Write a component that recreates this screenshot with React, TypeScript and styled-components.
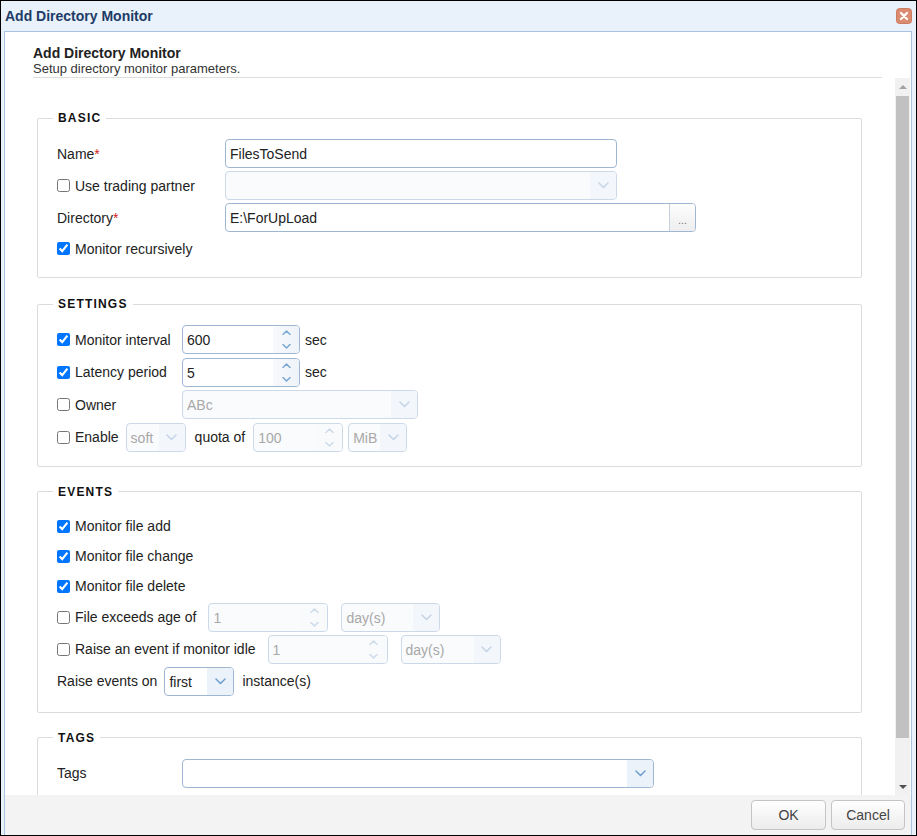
import React from 'react';
import styled, { createGlobalStyle } from 'styled-components';

const GlobalStyle = createGlobalStyle`
  html, body { margin: 0; padding: 0; background: #fff; }
  body {
    font-family: "Liberation Sans", Arial, Helvetica, sans-serif;
    font-size: 14px;
    color: #222;
  }
  *, *::before, *::after { box-sizing: border-box; }
`;

const Window = styled.div`
  width: 917px;
  height: 836px;
  border: 1px solid #000;
  background: #e9f1fb;
  display: flex;
  flex-direction: column;
  overflow: hidden;
`;

const TitleBar = styled.div`
  height: 30px;
  flex-shrink: 0;
  display: flex;
  align-items: center;
  justify-content: space-between;
  padding: 0 4px 1px 4px;
`;

const TitleText = styled.div`
  font-size: 14px;
  font-weight: bold;
  color: #1d3b66;
`;

const CloseButton = styled.button`
  width: 16px;
  height: 16px;
  padding: 0;
  border: none;
  background: none;
  display: flex;
  cursor: pointer;
`;

const Panel = styled.div`
  flex: 1;
  min-height: 0;
  margin: 0 4px 0 3px;
  border: 1px solid #a9c3e3;
  border-bottom: none;
  background: #fff;
  display: flex;
  flex-direction: column;
`;

const Header = styled.div`
  flex-shrink: 0;
  margin: 0 29px 0 28px;
  padding: 13px 0 1px;
  border-bottom: 1px solid #dedede;
`;

const HeaderTitle = styled.div`
  font-size: 14px;
  font-weight: bold;
  line-height: 16px;
  color: #222;
`;

const HeaderSub = styled.div`
  font-size: 13px;
  line-height: 15px;
  color: #333;
`;

const ScrollRow = styled.div`
  flex: 1;
  min-height: 0;
  display: flex;
`;

const ScrollContent = styled.div`
  flex: 1;
  min-width: 0;
  overflow: hidden;
  padding: 0 33px 0 32px;
`;

const Scrollbar = styled.div`
  width: 15px;
  margin-right: 1px;
  flex-shrink: 0;
  background: #f1f1f1;
  display: flex;
  flex-direction: column;
`;

const ScrollArrow = styled.div<{ $dir: 'up' | 'down'; $color: string }>`
  height: 17px;
  flex-shrink: 0;
  display: flex;
  align-items: center;
  justify-content: center;
  &::before {
    content: '';
    border-left: 4px solid transparent;
    border-right: 4px solid transparent;
    ${(p) =>
      p.$dir === 'up'
        ? `border-bottom: 4px solid ${p.$color};`
        : `border-top: 4px solid ${p.$color};`}
  }
`;

const Thumb = styled.div`
  height: 642px;
  margin: 1px 1px 0;
  background: #c1c1c1;
  flex-shrink: 0;
`;

const Track = styled.div`
  flex: 1;
`;

const Group = styled.fieldset<{ $mt: number; $pb: number }>`
  margin: ${(p) => p.$mt}px 0 0;
  min-width: 0;
  border: 1px solid #dcdcdc;
  border-radius: 2px;
  padding: 13px 20px ${(p) => p.$pb}px 19px;
`;

const Legend = styled.legend`
  margin-left: -4px;
  padding: 0 5px;
  font-size: 12px;
  font-weight: bold;
  letter-spacing: 1.2px;
  line-height: 16px;
  color: #111;
`;

const Rows = styled.div<{ $gap: number }>`
  display: flex;
  flex-direction: column;
  gap: ${(p) => p.$gap}px;
`;

const Row = styled.div<{ $h?: number }>`
  display: flex;
  align-items: center;
  height: ${(p) => p.$h ?? 29}px;
`;

const LabelCell = styled.label<{ $w?: number }>`
  ${(p) => (p.$w ? `width: ${p.$w}px;` : '')}
  flex-shrink: 0;
  display: flex;
  align-items: center;
  gap: 5px;
  white-space: nowrap;
`;

const Req = styled.span`
  color: #d42020;
`;

const Check = styled.input.attrs({ type: 'checkbox' })`
  margin: 0;
  width: 13px;
  height: 13px;
  flex-shrink: 0;
`;

const Text = styled.span<{ $ml?: number }>`
  margin-left: ${(p) => p.$ml ?? 0}px;
  white-space: nowrap;
`;

const Box = styled.div<{ $w: number; $off?: boolean; $ml?: number }>`
  width: ${(p) => p.$w}px;
  height: 29px;
  flex-shrink: 0;
  margin-left: ${(p) => p.$ml ?? 0}px;
  display: flex;
  align-items: stretch;
  border: 1px solid ${(p) => (p.$off ? '#cbd9e8' : '#9fb7d3')};
  border-radius: 4px;
  background: ${(p) => (p.$off ? '#fafbfd' : '#fff')};
  color: ${(p) => (p.$off ? '#a8a8a8' : '#222')};
  overflow: hidden;
`;

const BoxText = styled.span`
  flex: 1;
  min-width: 0;
  padding: 1px 4px 0;
  display: flex;
  align-items: center;
  white-space: nowrap;
  font-size: 14px;
`;

const ArrowCell = styled.span<{ $off?: boolean }>`
  width: 26px;
  flex-shrink: 0;
  display: flex;
  align-items: center;
  justify-content: center;
  background: ${(p) => (p.$off ? '#f3f6fa' : '#ecf2f9')};
`;

const SpinCell = styled.span<{ $off?: boolean }>`
  width: 26px;
  flex-shrink: 0;
  display: flex;
  flex-direction: column;
  align-items: center;
  justify-content: space-between;
  padding: 4px 0 4px;
  background: ${(p) => (p.$off ? '#f8fafc' : 'linear-gradient(to right, #f7f9fc, #eef3f9)')};
`;

const BrowseButton = styled.button`
  width: 26px;
  flex-shrink: 0;
  padding: 5px 0 0;
  border: none;
  border-left: 1px solid #c6d1dd;
  background: linear-gradient(#fdfdfd, #eeeeee);
  font-family: "Liberation Sans", Arial, sans-serif;
  font-size: 11px;
  color: #777;
`;

const Footer = styled.div`
  height: 40px;
  flex-shrink: 0;
  background: #f3f3f3;
  display: flex;
  justify-content: flex-end;
  align-items: flex-start;
  gap: 5px;
  padding: 5px 6px 0 0;
`;

const DialogButton = styled.button<{ $w: number }>`
  width: ${(p) => p.$w}px;
  height: 30px;
  border: 1px solid #c4c4c4;
  border-radius: 4px;
  background: linear-gradient(#ffffff, #ececec);
  font-family: "Liberation Sans", Arial, sans-serif;
  font-size: 14px;
  color: #444;
  padding: 0;
`;

const Chevron = ({ up, color, small }: { up?: boolean; color: string; small?: boolean }) => {
  const w = small ? 9 : 11;
  const h = small ? 5 : 7;
  const d = small
    ? up
      ? 'M1 4.5L4.5 1L8 4.5'
      : 'M1 0.5L4.5 4L8 0.5'
    : up
    ? 'M1 6l4.5-4.5L10 6'
    : 'M1 1l4.5 4.5L10 1';
  return (
    <svg width={w} height={h} viewBox={`0 0 ${w} ${h}`}>
      <path d={d} fill="none" stroke={color} strokeWidth="1.5" strokeLinecap="round" strokeLinejoin="round" />
    </svg>
  );
};

const CloseIcon = () => (
  <svg width="16" height="16" viewBox="0 0 16 16">
    <rect x="0.5" y="0.5" width="15" height="15" rx="3" fill="#da8b70" stroke="#cd7b5f" />
    <path d="M5 5l6 6M11 5l-6 6" stroke="#fff" strokeWidth="2.4" strokeLinecap="round" />
  </svg>
);

type FieldProps = { w: number; value?: string; off?: boolean; ml?: number };

const TextField = ({ w, value = '', off, ml }: FieldProps) => (
  <Box $w={w} $off={off} $ml={ml}>
    <BoxText>{value}</BoxText>
  </Box>
);

const SelectField = ({ w, value = '', off, ml }: FieldProps) => (
  <Box $w={w} $off={off} $ml={ml}>
    <BoxText>{value}</BoxText>
    <ArrowCell $off={off}>
      <Chevron color={off ? '#c4d5e7' : '#6f9fd0'} />
    </ArrowCell>
  </Box>
);

const SpinField = ({ w, value = '', off, ml }: FieldProps) => (
  <Box $w={w} $off={off} $ml={ml}>
    <BoxText>{value}</BoxText>
    <SpinCell $off={off}>
      <Chevron up small color={off ? '#cddbe9' : '#7aa8d4'} />
      <Chevron small color={off ? '#cddbe9' : '#7aa8d4'} />
    </SpinCell>
  </Box>
);

const CheckLabel = ({ label, checked, w }: { label: string; checked?: boolean; w?: number }) => (
  <LabelCell $w={w}>
    <Check defaultChecked={checked} />
    <span>{label}</span>
  </LabelCell>
);

export default function App() {
  return (
    <>
      <GlobalStyle />
      <Window>
        <TitleBar>
          <TitleText>Add Directory Monitor</TitleText>
          <CloseButton aria-label="Close">
            <CloseIcon />
          </CloseButton>
        </TitleBar>
        <Panel>
          <Header>
            <HeaderTitle>Add Directory Monitor</HeaderTitle>
            <HeaderSub>Setup directory monitor parameters.</HeaderSub>
          </Header>
          <ScrollRow>
            <ScrollContent>
              <Group $mt={32} $pb={15}>
                <Legend>BASIC</Legend>
                <Rows $gap={3}>
                  <Row>
                    <LabelCell $w={168}>
                      <span>
                        Name<Req>*</Req>
                      </span>
                    </LabelCell>
                    <TextField w={392} value="FilesToSend" />
                  </Row>
                  <Row>
                    <CheckLabel w={168} label="Use trading partner" />
                    <SelectField w={392} off />
                  </Row>
                  <Row>
                    <LabelCell $w={168}>
                      <span>
                        Directory<Req>*</Req>
                      </span>
                    </LabelCell>
                    <Box $w={471}>
                      <BoxText>E:\ForUpLoad</BoxText>
                      <BrowseButton>...</BrowseButton>
                    </Box>
                  </Row>
                  <Row $h={27}>
                    <CheckLabel label="Monitor recursively" checked />
                  </Row>
                </Rows>
              </Group>

              <Group $mt={18} $pb={14}>
                <Legend>SETTINGS</Legend>
                <Rows $gap={3.5}>
                  <Row>
                    <CheckLabel w={125} label="Monitor interval" checked />
                    <SpinField w={118} value="600" />
                    <Text $ml={5}>sec</Text>
                  </Row>
                  <Row>
                    <CheckLabel w={125} label="Latency period" checked />
                    <SpinField w={118} value="5" />
                    <Text $ml={5}>sec</Text>
                  </Row>
                  <Row>
                    <CheckLabel w={125} label="Owner" />
                    <SelectField w={236} value="ABc" off />
                  </Row>
                  <Row>
                    <CheckLabel label="Enable" />
                    <SelectField w={60} value="soft" off ml={7} />
                    <Text $ml={9}>quota of</Text>
                    <SpinField w={90} value="100" off ml={8} />
                    <SelectField w={59} value="MiB" off ml={5} />
                  </Row>
                </Rows>
              </Group>

              <Group $mt={17} $pb={16}>
                <Legend>EVENTS</Legend>
                <Rows $gap={3}>
                  <Row $h={27}>
                    <CheckLabel label="Monitor file add" checked />
                  </Row>
                  <Row $h={27}>
                    <CheckLabel label="Monitor file change" checked />
                  </Row>
                  <Row $h={27}>
                    <CheckLabel label="Monitor file delete" checked />
                  </Row>
                  <Row>
                    <CheckLabel label="File exceeds age of" />
                    <SpinField w={120} value="1" off ml={12} />
                    <SelectField w={99} value="day(s)" off ml={13} />
                  </Row>
                  <Row>
                    <CheckLabel label="Raise an event if monitor idle" />
                    <SpinField w={120} value="1" off ml={12} />
                    <SelectField w={100} value="day(s)" off ml={13} />
                  </Row>
                  <Row>
                    <Text>Raise events on</Text>
                    <SelectField w={70} value="first" ml={7} />
                    <Text $ml={8}>instance(s)</Text>
                  </Row>
                </Rows>
              </Group>

              <Group $mt={17} $pb={16}>
                <Legend>TAGS</Legend>
                <Rows $gap={3}>
                  <Row>
                    <LabelCell $w={125}>
                      <span>Tags</span>
                    </LabelCell>
                    <SelectField w={472} />
                  </Row>
                  <Row>
                    <LabelCell $w={125}>
                      <span>&nbsp;</span>
                    </LabelCell>
                  </Row>
                </Rows>
              </Group>
            </ScrollContent>
            <Scrollbar>
              <ScrollArrow $dir="up" $color="#a3a3a3" />
              <Thumb />
              <Track />
              <ScrollArrow $dir="down" $color="#505050" />
            </Scrollbar>
          </ScrollRow>
          <Footer>
            <DialogButton $w={75}>OK</DialogButton>
            <DialogButton $w={74}>Cancel</DialogButton>
          </Footer>
        </Panel>
      </Window>
    </>
  );
}
